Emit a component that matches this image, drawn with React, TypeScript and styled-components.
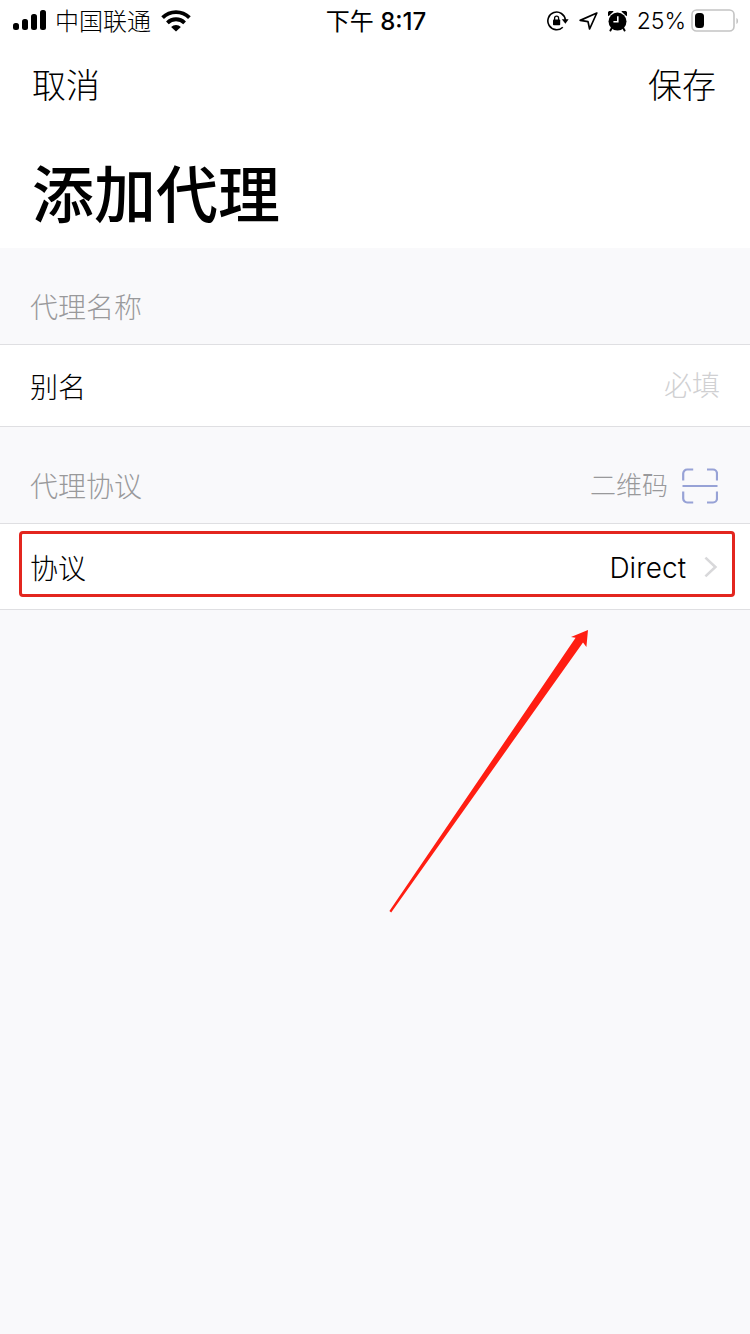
import React from 'react';
import styled, { createGlobalStyle } from 'styled-components';

const GlobalStyle = createGlobalStyle`
  *, *::before, *::after { box-sizing: border-box; }
  body {
    margin: 0;
    background: #f9f9fb;
    color: #000;
    font-family: Inter, "Noto Sans CJK SC", sans-serif;
    font-weight: 300;
  }
  button, input { font: inherit; color: inherit; margin: 0; padding: 0; border: 0; background: none; }
  button { cursor: pointer; }
  svg { display: block; flex: none; }
`;

const Page = styled.div`
  min-height: 100vh;
`;

const Header = styled.header`
  background: #fff;
  padding-bottom: 8px;
`;

const StatusBar = styled.div`
  display: grid;
  grid-template-columns: 1fr auto 1fr;
  align-items: center;
  height: 40px;
  padding: 0 11px 0 13px;
  font-size: 24px;
  line-height: 40px;
`;

const StatusGroup = styled.div<{ $end?: boolean }>`
  display: flex;
  align-items: center;
  gap: ${(p) => (p.$end ? 10 : 8)}px;
  justify-content: ${(p) => (p.$end ? 'flex-end' : 'flex-start')};
`;

const Carrier = styled.span`
  padding: 2px 2px 0 0;
`;

const Clock = styled.time`
  padding-top: 2px;
  font-weight: 400;
  white-space: pre;
`;

const Digits = styled.span`
  font-weight: 500;
`;

const Power = styled.div`
  display: flex;
  align-items: center;
  gap: 5px;
  font-size: 23px;
`;

const NavBar = styled.nav`
  display: flex;
  justify-content: space-between;
  align-items: center;
  height: 92px;
  padding: 0 34px 0 32px;
`;

const NavButton = styled.button`
  font-size: 34px;
  line-height: 48px;
`;

const Title = styled.h1`
  margin: 0;
  padding: 20px 32px 0;
  font-size: 62px;
  line-height: 88px;
  font-weight: 500;
`;

const SectionHeader = styled.div`
  display: flex;
  align-items: center;
  justify-content: space-between;
  height: 96px;
  padding: 22px 32px 0 30px;
  color: #99999b;
`;

const SectionTitle = styled.h2`
  margin: 0;
  padding-top: 2px;
  font-size: 28px;
  line-height: 40px;
  font-weight: inherit;
`;

const ScanButton = styled.button`
  display: flex;
  align-items: center;
  gap: 14px;
  font-size: 26px;
  line-height: 36px;
`;

const Group = styled.div`
  position: relative;
  background: #fff;
  border-top: 1px solid #dfdfe2;
  border-bottom: 1px solid #dfdfe2;
`;

const FieldRow = styled.label`
  display: flex;
  align-items: center;
  height: 81px;
  padding: 0 30px;
  font-size: 28px;
`;

const FieldInput = styled.input`
  flex: 1;
  min-width: 0;
  text-align: right;
  outline: none;
  &::placeholder { color: #d0d0d2; opacity: 1; }
`;

const LinkRow = styled.button`
  display: flex;
  align-items: center;
  width: 100%;
  height: 85px;
  padding: 0 32px 0 30px;
  font-size: 28px;
  text-align: left;
`;

const LinkValue = styled.span`
  margin-left: auto;
  margin-right: 18px;
  padding-top: 3px;
`;

const Highlight = styled.div`
  position: absolute;
  top: 7px;
  left: 19px;
  right: 15px;
  height: 66px;
  border: 3px solid #e3261f;
  border-radius: 4px;
  pointer-events: none;
`;

const Pointer = styled.svg`
  position: absolute;
  top: 105px;
  right: 159px;
  pointer-events: none;
`;

const SignalIcon = () => (
  <svg width="34" height="22" viewBox="0 0 34 22" aria-hidden="true">
    <rect x="0" y="13" width="6" height="7" rx="2.5" />
    <rect x="9" y="9" width="6" height="11" rx="2.5" />
    <rect x="18" y="4" width="6" height="16" rx="2.5" />
    <rect x="27" y="0" width="6" height="20" rx="2.5" />
  </svg>
);

const WifiIcon = () => (
  <svg width="30" height="22" viewBox="0 0 30 22" aria-hidden="true">
    <g fill="none" stroke="#000" strokeWidth="3.8">
      <path d="M1.6 7.6a19 19 0 0 1 26.8 0" />
      <path d="M6.4 12.8a12.2 12.2 0 0 1 17.2 0" />
    </g>
    <path d="M15 21.5l-4.9-4.4a7 7 0 0 1 9.8 0z" />
  </svg>
);

const RotationLockIcon = () => (
  <svg width="22" height="20" viewBox="0 0 22 20" aria-hidden="true">
    <path d="M15.8 16.2A8.8 8.8 0 1 1 18.4 9" fill="none" stroke="#000" strokeWidth="1.6" />
    <path d="M14.8 8.2h6.8l-3.2 4.6z" />
    <rect x="6" y="8.4" width="7.2" height="5.8" rx="0.8" />
    <path d="M7.6 9V7.2a2 2 0 0 1 4 0V9" fill="none" stroke="#000" strokeWidth="1.3" />
  </svg>
);

const LocationIcon = () => (
  <svg width="19" height="18" viewBox="0 0 19 18" aria-hidden="true">
    <path d="M17.8 1L1.2 8.4l7.8 1.2 1.6 7.4z" fill="none" stroke="#000" strokeWidth="1.7" strokeLinejoin="round" />
  </svg>
);

const AlarmIcon = () => (
  <svg width="19" height="21" viewBox="0 0 19 21" aria-hidden="true">
    <circle cx="9.5" cy="10.6" r="9" />
    <path d="M0.5 5.2A3.4 3.4 0 0 1 5.6 0.6zM18.5 5.2A3.4 3.4 0 0 0 13.4 0.6z" />
    <path d="M4 16.8l-1.6 2.6M15 16.8l1.6 2.6" stroke="#000" strokeWidth="2" strokeLinecap="round" />
    <path d="M9.8 5.2v5.6H5.4" fill="none" stroke="#fff" strokeWidth="1.6" />
  </svg>
);

const BatteryIcon = () => (
  <svg width="48" height="24" viewBox="0 0 48 24" aria-hidden="true">
    <rect x="1" y="1" width="42" height="21" rx="4.5" fill="none" stroke="#c4c4c4" strokeWidth="1.6" />
    <rect x="4" y="4" width="9" height="15" rx="3.5" />
    <path d="M45.4 9c2.2.6 2.2 5.4 0 6z" fill="#c4c4c4" />
  </svg>
);

const ScanIcon = () => (
  <svg width="36" height="36" viewBox="1 0 36 36" fill="none" stroke="#97a2d6" strokeWidth="2.2" aria-hidden="true">
    <path d="M2.2 12.5V5.5a4 4 0 0 1 4-4h6M26 1.5h6a4 4 0 0 1 4 4v7M36 23.5v7a4 4 0 0 1-4 4h-6M12.2 34.5h-6a4 4 0 0 1-4-4v-7M1.5 18h35" />
  </svg>
);

const ChevronIcon = () => (
  <svg width="14" height="22" viewBox="0 0 14 22" fill="none" stroke="#d8d8da" strokeWidth="2.6" aria-hidden="true">
    <path d="M1.4 1.6L11.4 11l-10 9.4" />
  </svg>
);

export default function App() {
  return (
    <Page>
      <GlobalStyle />
      <Header>
        <StatusBar>
          <StatusGroup>
            <SignalIcon />
            <Carrier>中国联通</Carrier>
            <WifiIcon />
          </StatusGroup>
          <Clock>下午<Digits> 8:17</Digits></Clock>
          <StatusGroup $end>
            <RotationLockIcon />
            <LocationIcon />
            <AlarmIcon />
            <Power>
              <span>25%</span>
              <BatteryIcon />
            </Power>
          </StatusGroup>
        </StatusBar>
        <NavBar>
          <NavButton type="button">取消</NavButton>
          <NavButton type="button">保存</NavButton>
        </NavBar>
        <Title>添加代理</Title>
      </Header>
      <main>
        <SectionHeader>
          <SectionTitle>代理名称</SectionTitle>
        </SectionHeader>
        <Group>
          <FieldRow>
            别名
            <FieldInput type="text" placeholder="必填" />
          </FieldRow>
        </Group>
        <SectionHeader>
          <SectionTitle>代理协议</SectionTitle>
          <ScanButton type="button">
            二维码
            <ScanIcon />
          </ScanButton>
        </SectionHeader>
        <Group>
          <LinkRow type="button">
            协议
            <LinkValue>Direct</LinkValue>
            <ChevronIcon />
          </LinkRow>
          <Highlight />
          <Pointer width="202" height="284" viewBox="0 0 202 284" fill="#ff1e12" aria-hidden="true">
            <path d="M199 1l-1.6 17-3.4-4.4L2.2 283.4l-1.8-1.4L186.6 8.8l-4.6-.8z" />
          </Pointer>
        </Group>
      </main>
    </Page>
  );
}
